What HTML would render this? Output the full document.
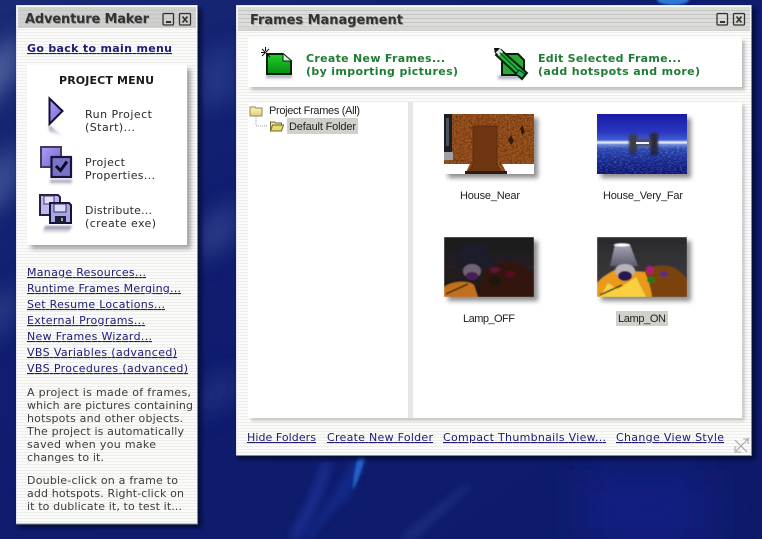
<!DOCTYPE html>
<html><head><meta charset="utf-8"><style>
html,body{margin:0;padding:0;background:#0f1c6a;overflow:hidden}
svg{display:block}
text{font-family:"DejaVu Sans","Liberation Sans",sans-serif;font-size:11px;fill:#2a2a2a}
.lk{fill:#1c1c74;text-decoration:underline}
.ln{font-family:"Liberation Sans",sans-serif;fill:#222}
.gr{font-weight:bold;fill:#1f7d33}
.ti{font-weight:bold;font-size:13px;fill:#333}
.p{fill:#3c3c3c}
</style></head><body>
<svg width="762" height="539" viewBox="0 0 762 539" xmlns="http://www.w3.org/2000/svg">
<defs>
<pattern id="st" width="3" height="3" patternUnits="userSpaceOnUse"><rect width="3" height="3" fill="#fbfbf9"/><rect y="2" width="3" height="1" fill="#ededeb"/></pattern>
<pattern id="tt" width="4" height="4" patternUnits="userSpaceOnUse"><rect width="4" height="4" fill="#dcdcda"/><rect y="2" width="4" height="1" fill="#c4c4c2"/></pattern>
<linearGradient id="bg" x1="0" y1="0" x2="1" y2="1"><stop offset="0" stop-color="#1a2a74"/><stop offset=".35" stop-color="#101d70"/><stop offset="1" stop-color="#0e1a68"/></linearGradient>
<linearGradient id="gn" x1="0" y1="0" x2="0" y2="1"><stop offset="0" stop-color="#22d02a"/><stop offset="1" stop-color="#088a14"/></linearGradient>
<linearGradient id="pu" x1="0" y1="0" x2="1" y2="1"><stop offset="0" stop-color="#b09ff0"/><stop offset="1" stop-color="#7264d8"/></linearGradient>
<linearGradient id="fade" x1="0" y1="0" x2="0" y2="1"><stop offset="0" stop-color="#6a6a98" stop-opacity=".9"/><stop offset="1" stop-color="#aaa" stop-opacity="0"/></linearGradient>
<linearGradient id="sky" x1="0" y1="0" x2="0" y2="1"><stop offset="0" stop-color="#1a1aa4"/><stop offset=".3" stop-color="#2a36c0"/><stop offset=".43" stop-color="#3f5cd2"/><stop offset=".46" stop-color="#b8c8f8"/><stop offset=".48" stop-color="#eef2ff"/><stop offset=".51" stop-color="#6c86d8"/><stop offset=".58" stop-color="#2a48b0"/><stop offset=".78" stop-color="#16268e"/><stop offset="1" stop-color="#0b1470"/></linearGradient>
<linearGradient id="rm" x1="0" y1="0" x2="0" y2="1"><stop offset="0" stop-color="#1c1b1d"/><stop offset=".5" stop-color="#232022"/><stop offset="1" stop-color="#241710"/></linearGradient>
<linearGradient id="rm2" x1="0" y1="0" x2="0" y2="1"><stop offset="0" stop-color="#2a2a2c"/><stop offset=".6" stop-color="#38363a"/><stop offset="1" stop-color="#4a3020"/></linearGradient>
<linearGradient id="shade" x1="0" y1="0" x2="0" y2="1"><stop offset="0" stop-color="#a4a4b2"/><stop offset="1" stop-color="#5c5c6e"/></linearGradient>
<linearGradient id="fd" x1="0" y1="0" x2="0" y2="1"><stop offset="0" stop-color="#fdf7c0"/><stop offset="1" stop-color="#e0d070"/></linearGradient>
<filter id="s1" x="-20%" y="-20%" width="140%" height="140%"><feGaussianBlur stdDeviation="2.5"/></filter>
<filter id="s2" x="-30%" y="-30%" width="160%" height="160%"><feGaussianBlur stdDeviation="1.5"/></filter>
<filter id="s3" filterUnits="userSpaceOnUse" x="-50" y="-50" width="862" height="639"><feGaussianBlur stdDeviation="4"/></filter>
<filter id="s8" filterUnits="userSpaceOnUse" x="-50" y="-50" width="862" height="639"><feGaussianBlur stdDeviation="10"/></filter>
<filter id="s20" filterUnits="userSpaceOnUse" x="-50" y="-50" width="862" height="639"><feGaussianBlur stdDeviation="22"/></filter>
<filter id="s0" x="-30%" y="-60%" width="160%" height="220%"><feGaussianBlur stdDeviation="1"/></filter>
<filter id="th" filterUnits="userSpaceOnUse" x="430" y="100" width="270" height="210"><feGaussianBlur stdDeviation=".55"/></filter>
<filter id="nz" filterUnits="objectBoundingBox" x="0" y="0" width="1" height="1"><feTurbulence type="fractalNoise" baseFrequency=".55" numOctaves="2" seed="4"/><feColorMatrix values="0 0 0 0 0  0 0 0 0 0  0 0 0 0 0  2.4 0 0 0 -.85"/><feComposite in2="SourceGraphic" operator="in"/></filter>
<filter id="nzw" filterUnits="objectBoundingBox" x="0" y="0" width="1" height="1"><feTurbulence type="fractalNoise" baseFrequency=".35 .8" numOctaves="2" seed="9"/><feColorMatrix values="0 0 0 0 .75  0 0 0 0 .8  0 0 0 0 1  2.4 0 0 0 -1.05"/><feComposite in2="SourceGraphic" operator="in"/></filter>
<clipPath id="c1"><rect x="444" y="114" width="90" height="60"/></clipPath>
<clipPath id="c2"><rect x="597" y="114" width="90" height="60"/></clipPath>
<clipPath id="c3"><rect x="444" y="237" width="90" height="60"/></clipPath>
<clipPath id="c4"><rect x="597" y="237" width="90" height="60"/></clipPath>
</defs>

<!-- desktop -->
<rect width="762" height="539" fill="url(#bg)"/>
<g filter="url(#s8)">
<path d="M-20 65 L18 30 L18 75 L-20 115Z" fill="#5b6ea8" opacity=".75"/>
<path d="M-20 175 L18 140 L18 190 L-20 225Z" fill="#5468a4" opacity=".6"/>
<path d="M-20 305 L18 280 L18 320 L-20 350Z" fill="#33458e" opacity=".6"/>
<path d="M198 60 L236 40 L236 100 L198 110Z" fill="#2a3a8c" opacity=".7"/>
<path d="M198 225 L236 195 L236 240 L198 265Z" fill="#34468e" opacity=".7"/>
<path d="M198 385 L236 365 L236 400 L198 420Z" fill="#1e2e80" opacity=".8"/>
</g>
<rect x="580" y="470" width="130" height="80" fill="#13229a" opacity=".5" filter="url(#s20)"/>
<g filter="url(#s3)">
<path d="M466 484 L472 486 L415 539 L398 539Z" fill="#2a3a8a" opacity=".55"/>
<path d="M332 462 L322 462 C314 490 300 515 288 539 L300 539 C314 515 326 490 332 462Z" fill="#1a36a0" opacity=".65"/>
</g>
<path d="M353 457 L366 457 C362 472 356 486 348 498 C328 515 318 528 312 539 L304 539 C318 515 340 490 353 457Z" fill="#1338a4" opacity=".5" filter="url(#s3)"/>
<path d="M358 457 L365 457 C362 470 358 480 353 490 C353 478 355 468 358 457Z" fill="#2a78de" opacity=".75" filter="url(#s0)"/>
<ellipse cx="673" cy="0" rx="16" ry="5" fill="#2d78d8" filter="url(#s0)"/>

<!-- left window -->
<rect x="18" y="8" width="184" height="520" fill="#050a30" opacity=".75" filter="url(#s2)"/>
<rect x="16" y="5" width="182" height="519" fill="url(#st)"/>
<path d="M16.500 524V5.500H197.500" fill="none" stroke="#e6e6ea"/>
<path d="M197.500 5V524H16" fill="none" stroke="#8a8a8e"/>
<rect x="18" y="7" width="178" height="21" fill="#c8c8c6"/>
<rect x="18" y="7" width="178" height="21" fill="url(#tt)" opacity=".4"/>
<text class="ti" x="25.800" y="23.800" style="fill:#8a8a8a" opacity=".7" textLength="124">Adventure Maker</text>
<text class="ti" x="25" y="23" textLength="124">Adventure Maker</text>
<g fill="none" stroke="#333" stroke-width="1.300">
<rect x="163" y="13.500" width="10.500" height="11.500" rx="1"/><rect x="179.500" y="13.500" width="11" height="11.500" rx="1"/>
<path d="M166 22h5" stroke-width="2"/><path d="M182.500 16.500l5 6M187.500 16.500l-5 6" stroke-width="1.700"/>
</g>

<text class="lk" x="27" y="52" textLength="145" style="font-weight:bold">Go back to main menu</text>

<rect x="31" y="69" width="160" height="180" fill="#555" opacity=".5" filter="url(#s1)"/>
<rect x="27" y="65" width="160" height="180" fill="#fff"/>
<text x="59" y="84" textLength="95" style="font-weight:bold;fill:#1a1a1a">PROJECT MENU</text>
<text x="85" y="118" textLength="67">Run Project</text>
<text x="85" y="131" textLength="50">(Start)...</text>
<text x="85" y="166" textLength="40">Project</text>
<text x="85" y="179" textLength="70">Properties...</text>
<text x="85" y="214" textLength="67">Distribute...</text>
<text x="85" y="227" textLength="71">(create exe)</text>

<!-- run icon -->
<path d="M49 125 L64 137 L49 132Z" fill="url(#fade)" filter="url(#s0)"/>
<path d="M49.500 98.500 L62.500 111 L49.500 124Z" fill="url(#pu)" stroke="#12103a" stroke-width="2"/>
<!-- properties icon -->
<rect x="41" y="147" width="20" height="20" fill="url(#pu)" stroke="#433a62" stroke-width="2"/>
<rect x="50" y="180" width="22" height="5" fill="url(#fade)" filter="url(#s0)"/>
<rect x="51.500" y="157" width="19.500" height="20" fill="#7a74c8" stroke="#14143c" stroke-width="2.200"/>
<path d="M56 166 l4.500 4.500 l6.500 -9" fill="none" stroke="#0b0b20" stroke-width="3"/>
<!-- disk icon -->
<path d="M45 226h27l-4 8h-26Z" fill="url(#fade)" filter="url(#s0)"/>
<path d="M40 195h18l2 2v18H40Z" fill="#c4b6f0" stroke="#28203f" stroke-width="2"/>
<rect x="44" y="196" width="10" height="8" fill="#e6e0fc" stroke="#443a66"/>
<path d="M50 203h19l2 2v18H50Z" fill="#a8a6e6" stroke="#14143a" stroke-width="2"/>
<rect x="54" y="204" width="12" height="8" fill="#dcdcfa" stroke="#33335c"/>
<rect x="55" y="216" width="11" height="7" fill="#1e1e3c"/>
<rect x="61" y="218" width="2" height="3" fill="#aaa"/>

<text class="lk" x="27" y="276" textLength="119">Manage Resources...</text>
<text class="lk" x="27" y="292" textLength="154">Runtime Frames Merging...</text>
<text class="lk" x="27" y="308" textLength="138">Set Resume Locations...</text>
<text class="lk" x="27" y="324" textLength="118">External Programs...</text>
<text class="lk" x="27" y="340" textLength="125">New Frames Wizard...</text>
<text class="lk" x="27" y="356" textLength="150">VBS Variables (advanced)</text>
<text class="lk" x="27" y="372" textLength="161">VBS Procedures (advanced)</text>

<text class="p" x="27" y="396" textLength="164">A project is made of frames,</text>
<text class="p" x="27" y="409" textLength="166">which are pictures containing</text>
<text class="p" x="27" y="422" textLength="156">hotspots and other objects.</text>
<text class="p" x="27" y="435" textLength="157">The project is automatically</text>
<text class="p" x="27" y="448" textLength="129">saved when you make</text>
<text class="p" x="27" y="461" textLength="77">changes to it.</text>
<text class="p" x="27" y="484" textLength="151">Double-click on a frame to</text>
<text class="p" x="27" y="497" textLength="157">add hotspots. Right-click on</text>
<text class="p" x="27" y="510" textLength="155">it to dublicate it, to test it...</text>

<!-- right window -->
<rect x="238" y="8" width="518" height="452" fill="#050a30" opacity=".75" filter="url(#s2)"/>
<rect x="236" y="5" width="516" height="451" fill="url(#st)"/>
<path d="M236.500 456V5.500H751.500" fill="none" stroke="#e6e6ea"/>
<path d="M751.500 5V455.500H236" fill="none" stroke="#8a8a8e"/>
<rect x="238" y="7" width="512" height="24" fill="url(#tt)"/>
<rect x="238" y="26" width="512" height="5" fill="#d4d4d2" opacity=".7"/>
<text class="ti" x="250.800" y="24.800" style="fill:#8a8a8a" opacity=".7" textLength="153">Frames Management</text>
<text class="ti" x="250" y="24" textLength="153">Frames Management</text>
<g fill="none" stroke="#333" stroke-width="1.300">
<rect x="717" y="13.500" width="10.500" height="11.500" rx="1"/><rect x="733.500" y="13.500" width="11" height="11.500" rx="1"/>
<path d="M720 22h5" stroke-width="2"/><path d="M736.500 16.500l5 6M741.500 16.500l-5 6" stroke-width="1.700"/>
</g>

<rect x="251" y="41" width="494" height="49" fill="#666" opacity=".4" filter="url(#s2)"/>
<rect x="248" y="38" width="494" height="49" fill="#fff"/>
<!-- new frame icon -->
<rect x="266" y="75" width="26" height="5" fill="url(#fade)" filter="url(#s0)"/>
<path d="M267 54H283L291 61V74H267Z" fill="url(#gn)" stroke="#07200a" stroke-width="2"/>
<path d="M283 54V61H291" fill="#dfeedd" stroke="#07200a" stroke-width="1"/>
<path d="M262 49l8 8M262 56l3-3M269 49l-3 3M265.500 47v4M261 52.500h4" stroke="#111" stroke-width="1" fill="none"/>
<text class="gr" x="306" y="62" textLength="139">Create New Frames...</text>
<text class="gr" x="306" y="75" textLength="152">(by importing pictures)</text>
<!-- edit icon -->
<rect x="498" y="76" width="24" height="5" fill="url(#fade)" filter="url(#s0)"/>
<path d="M502 54H518L524 60V75H502Z" fill="#2aa83a" stroke="#07200a" stroke-width="2"/>
<path d="M496 55 L501 50 L527 73 L522 79Z" fill="#22b83e" stroke="#07200a" stroke-width="2"/>
<path d="M494 48 L500 48 L495 54Z" fill="#111"/>
<path d="M496 52 L500 49 L503 52 L499 56Z" fill="#e2e2e2"/>
<path d="M500 53 L523 75" stroke="#0a5a18" stroke-width="1.500"/>
<path d="M519 70l6 4-3 4-6-4Z" fill="#2ea868" stroke="#07200a"/>
<text class="gr" x="538" y="62" textLength="143">Edit Selected Frame...</text>
<text class="gr" x="538" y="75" textLength="162">(add hotspots and more)</text>

<!-- panels -->
<rect x="251" y="105" width="494" height="316" fill="#777" opacity=".35" filter="url(#s2)"/>
<rect x="248" y="102" width="160" height="316" fill="#fff"/>
<rect x="408" y="102" width="5" height="316" fill="#e6e6e4"/>
<rect x="413" y="102" width="329" height="316" fill="#fff"/>

<!-- tree -->
<path d="M250 107h5l1 1h6v8h-12Z" fill="url(#fd)" stroke="#8a8560"/>
<path d="M256 116v10h12" fill="none" stroke="#999" stroke-dasharray="1 1"/>
<path d="M270.500 122h4l1 1h6v8h-11Z" fill="#f2e890" stroke="#6b6430"/>
<path d="M270.500 131l2-6h11l-2 6Z" fill="#e8d870" stroke="#6b6430"/>
<rect x="287" y="118" width="71" height="16" fill="#d2d0ca"/>
<text class="ln" x="269" y="114" textLength="91">Project Frames (All)</text>
<text class="ln" x="289" y="130" textLength="67">Default Folder</text>

<!-- thumb shadows -->
<g fill="#444" opacity=".6" filter="url(#s1)">
<rect x="448" y="118" width="90" height="60"/><rect x="601" y="118" width="90" height="60"/>
<rect x="448" y="241" width="90" height="60"/><rect x="601" y="241" width="90" height="60"/>
</g>

<!-- House_Near -->
<g clip-path="url(#c1)">
<rect x="444" y="114" width="90" height="60" fill="#a3561f"/>
<rect x="444" y="114" width="90" height="60" fill="#000" filter="url(#nz)" opacity=".38"/>
<rect x="444" y="114" width="8" height="38" fill="#1a1e22"/>
<rect x="446" y="118" width="3" height="28" fill="#4a525a"/>
<rect x="444" y="152" width="9" height="8" fill="#a0a0a4"/>
<path d="M473 126h24v38l4 8h-32l4-8Z" fill="#6f3612" stroke="#522608" stroke-width=".7"/>
<path d="M444 164h26l-5 10h-21Z" fill="#fff"/>
<path d="M502 164h32v10h-27Z" fill="#fff"/>
<rect x="465" y="171" width="42" height="3" fill="#2c1c12"/>
<path d="M508 140l3-5 3 6-3 4ZM520 128l3-2 2 6-3 3Z" fill="#3c1808"/>
<path d="M483 114v12M488 114v12M478 114v12" stroke="#7e3c12" stroke-width="1"/>
</g>

<!-- House_Very_Far -->
<g clip-path="url(#c2)">
<rect x="597" y="114" width="90" height="60" fill="url(#sky)"/>
<rect x="597" y="145" width="90" height="29" fill="#fff" filter="url(#nzw)" opacity=".28"/>
<g filter="url(#s0)">
<rect x="629" y="134" width="8" height="17" fill="#3a3a48"/>
<rect x="650" y="133" width="8" height="19" fill="#2c2c3a"/>
<rect x="636" y="139" width="15" height="7" fill="#4a4a5e"/>
<rect x="630" y="151" width="6" height="4" fill="#2a2f6a"/><rect x="650" y="152" width="8" height="4" fill="#1e2660"/>
</g>
<rect x="636" y="142" width="13" height="2" fill="#f4f4ff"/>
</g>

<!-- Lamp_OFF -->
<g clip-path="url(#c3)" filter="url(#th)">
<rect x="444" y="237" width="90" height="60" fill="url(#rm)"/>
<path d="M478 297l6-24c2-8 20-12 32-10 10 2 16 10 18 14v20Z" fill="#33190a"/>
<path d="M463 244h24l6 24h-38Z" fill="#1e1d2a"/>
<ellipse cx="472" cy="271" rx="9" ry="7" fill="#6f6272"/>
<ellipse cx="472" cy="276" rx="6" ry="4" fill="#4a1a5a"/>
<ellipse cx="495" cy="270" rx="5" ry="3" fill="#5a1434"/>
<ellipse cx="510" cy="274" rx="5" ry="3" fill="#5a1020"/>
<ellipse cx="495" cy="281" rx="6" ry="5" fill="#1c1608"/>
<path d="M444 297v-10c8-6 24-7 30-2l4 12Z" fill="#c2701c"/>
<path d="M446 294l22-10" stroke="#15150c" stroke-width="1.500"/>
</g>

<!-- Lamp_ON -->
<g clip-path="url(#c4)" filter="url(#th)">
<rect x="597" y="237" width="90" height="60" fill="url(#rm2)"/>
<path d="M640 297l4-24c4-8 22-10 32-4 6 4 10 8 11 10v18Z" fill="#7a4210"/>
<path d="M597 297v-14c5-6 12-10 18-13l30 2c3 8 6 16 7 25Z" fill="#e89a1e"/>
<path d="M600 297l8-14 10 6 18-12 10 20Z" fill="#f8d040"/>
<path d="M615 245h15l8 21h-28Z" fill="url(#shade)"/>
<ellipse cx="622" cy="245" rx="8" ry="1.500" fill="#fff"/>
<ellipse cx="625" cy="271" rx="10" ry="7" fill="#b8b2b6"/>
<ellipse cx="625" cy="276" rx="7" ry="5" fill="#2b1450"/>
<ellipse cx="650" cy="270" rx="4" ry="4" fill="#b01a70"/>
<ellipse cx="651" cy="280" rx="4" ry="3" fill="#1e7a24"/>
<ellipse cx="664" cy="274" rx="4" ry="3" fill="#602a80"/>
<path d="M600 295l22-10" stroke="#1a1a10" stroke-width="1.500"/>
</g>

<text class="ln" x="460" y="199" textLength="60">House_Near</text>
<text class="ln" x="603" y="199" textLength="80">House_Very_Far</text>
<text class="ln" x="463" y="322" textLength="52">Lamp_OFF</text>
<rect x="616" y="311" width="52" height="15" fill="#d2d0ca"/>
<text class="ln" x="618" y="322" textLength="48">Lamp_ON</text>

<text class="lk" x="247" y="441" textLength="69">Hide Folders</text>
<text class="lk" x="327" y="441" textLength="106">Create New Folder</text>
<text class="lk" x="443" y="441" textLength="163">Compact Thumbnails View...</text>
<text class="lk" x="616" y="441" textLength="108">Change View Style</text>
<path d="M735 440l12 12M736 451l13-13M735 446v6h6M743 439h5v5" fill="none" stroke="#a4a4a4"/>
</svg>
</body></html>
